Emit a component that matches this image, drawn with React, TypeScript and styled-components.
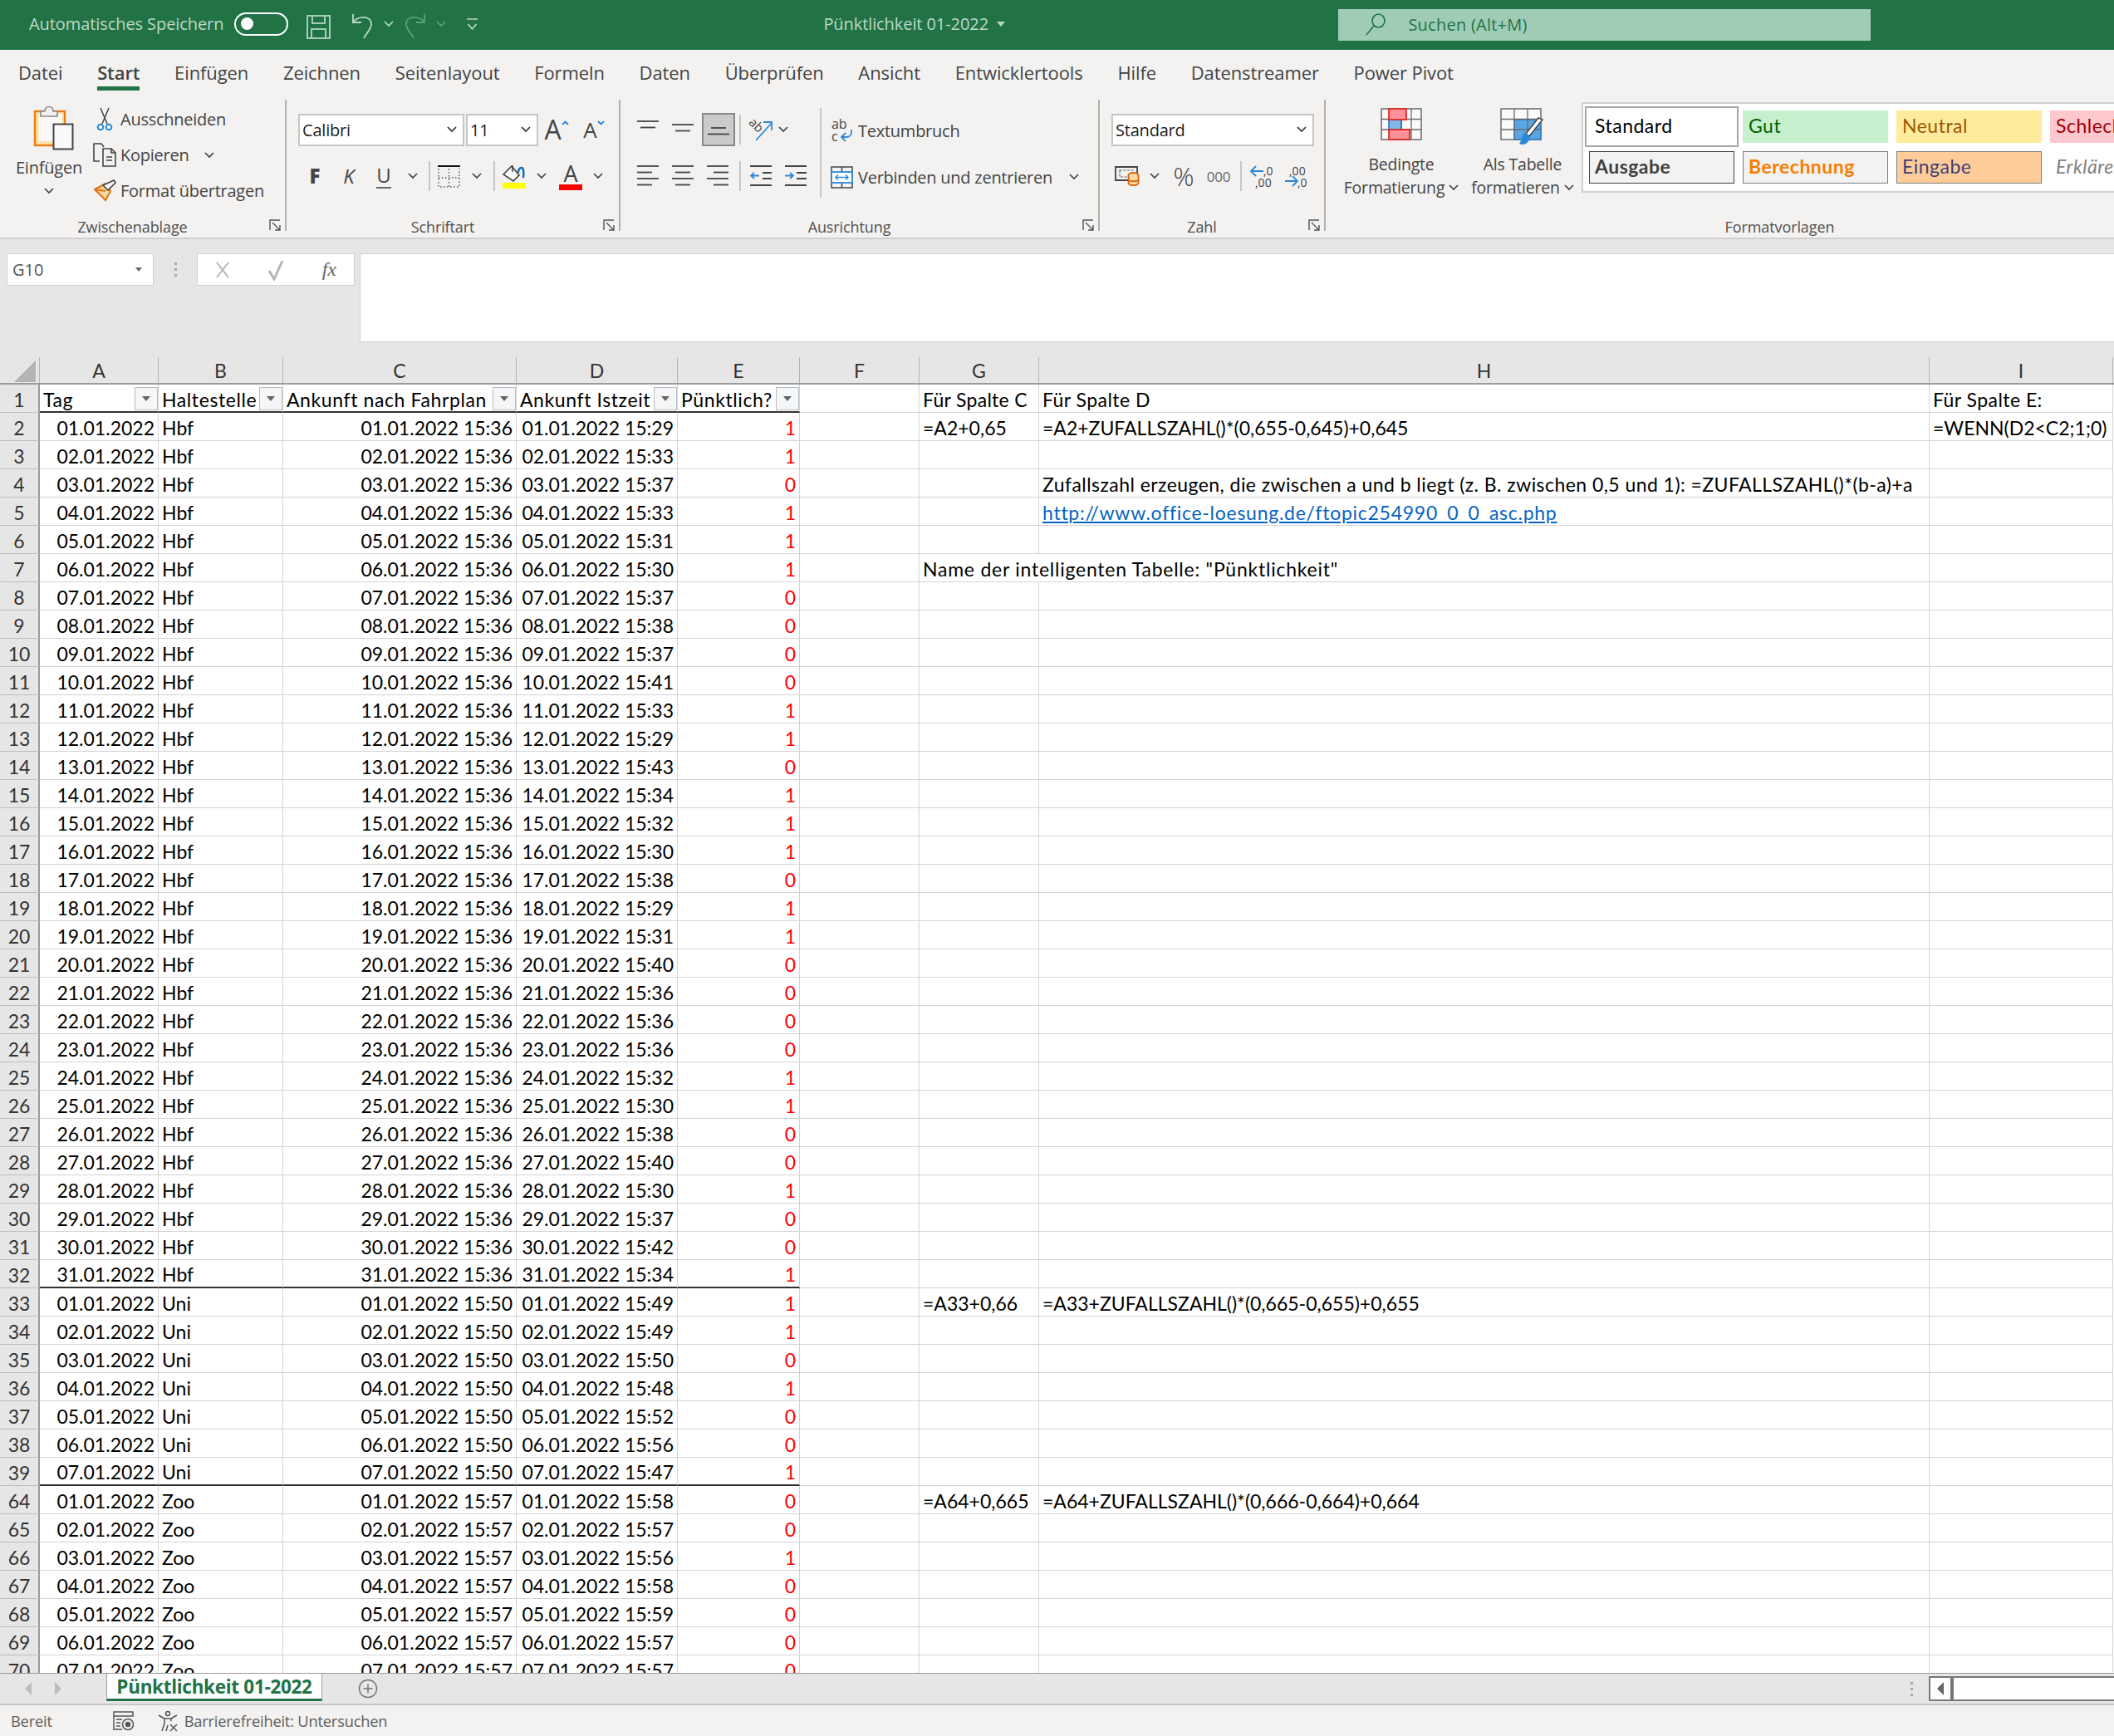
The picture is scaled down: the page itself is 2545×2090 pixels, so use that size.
import React from 'react';
import styled, { createGlobalStyle } from 'styled-components';

const uiFont = '"Open Sans", "Noto Sans", sans-serif';
const cellFont = 'Lato, "Liberation Sans", sans-serif';
const columns = '48px 143px 150px 281px 194px 147px 144px 144px 1072px 221px 1fr';

const GlobalStyle = createGlobalStyle`
  html, body { margin: 0; padding: 0; background: #f3f2f1; }
  * { box-sizing: border-box; }
`;

const Page = styled.div`
  width: 2545px;
  height: 2090px;
  display: flex;
  flex-direction: column;
  overflow: hidden;
  font-family: ${uiFont};
  color: #444;
  background: #f3f2f1;
`;

/* title bar */
const TitleBar = styled.div`
  height: 60px;
  flex: none;
  background: #217346;
  display: flex;
  align-items: center;
  padding: 0 0 3px 35px;
  color: #bcd8c8;
  font-size: 20px;
  letter-spacing: -0.08px;
`;
const Toggle = styled.div`
  width: 65px;
  height: 28px;
  margin-left: 13px;
  border: 2px solid #fff;
  border-radius: 14px;
  display: flex;
  align-items: center;
  padding-left: 6px;
  &::before {
    content: '';
    width: 15px;
    height: 15px;
    border-radius: 50%;
    background: #fff;
  }
`;
const Qat = styled.div<{ $w: number }>`
  width: ${(p) => p.$w}px;
  flex: none;
  display: flex;
  align-items: center;
  justify-content: center;
`;
const QatIconWrap = styled.div<{ $drop: number }>`
  margin-top: ${(p) => p.$drop}px;
  display: flex;
`;
const DocTitle = styled.div`
  margin-left: 416px;
  display: flex;
  align-items: center;
  gap: 10px;
  width: 620px;
`;
const SearchBox = styled.div`
  width: 641px;
  height: 38px;
  margin-top: 3px;
  padding: 0 0 2px 33px;
  background: #a0ccb5;
  color: #217346;
  display: flex;
  align-items: center;
  gap: 26px;
  letter-spacing: 0.25px;
`;

/* ribbon tabs */
const TabRow = styled.div`
  height: 55px;
  flex: none;
  display: flex;
  gap: 41.7px;
  padding-left: 22px;
`;
const RibbonTab = styled.div<{ $active?: boolean }>`
  height: 49px;
  padding-top: 11px;
  font-size: 22px;
  line-height: 32px;
  letter-spacing: -0.1px;
  white-space: nowrap;
  color: #444;
  font-weight: ${(p) => (p.$active ? 600 : 400)};
  border-bottom: 5px solid ${(p) => (p.$active ? '#217346' : 'transparent')};
`;

/* ribbon body */
const Ribbon = styled.div`
  height: 173px;
  flex: none;
  display: flex;
  padding: 5px 0 8px;
  border-bottom: 2px solid #d2d0ce;
`;
const Group = styled.div<{ $w: number; $last?: boolean }>`
  width: ${(p) => p.$w}px;
  flex: none;
  display: flex;
  flex-direction: column;
  border-right: ${(p) => (p.$last ? 'none' : '2px solid #b3b0ad')};
`;
const GroupBody = styled.div`
  height: 138px;
  display: flex;
`;
const GroupFooter = styled.div`
  height: 20px;
  display: flex;
  align-items: flex-end;
  padding-right: 5px;
`;
const GroupLabel = styled.div`
  flex: 1;
  height: 20px;
  line-height: 30px;
  text-align: center;
  font-size: 18px;
  letter-spacing: -0.1px;
  color: #505050;
`;
const Launcher = styled.div`
  width: 14px;
  height: 14px;
  margin-left: 5px;
  display: flex;
`;
const PasteColumn = styled.div`
  width: 118px;
  margin-right: -7px;
  padding-top: 7px;
  display: flex;
  flex-direction: column;
  align-items: center;
  font-size: 20px;
  letter-spacing: -0.2px;
  gap: 11px;
`;
const PasteIconWrap = styled.div`
  width: 118px;
  height: 50px;
  padding-left: 40px;
`;
const ClipColumn = styled.div`
  padding-top: 2px;
  display: flex;
  flex-direction: column;
`;
const ClipRow = styled.div`
  height: 43px;
  display: flex;
  align-items: center;
  font-size: 20px;
  letter-spacing: -0.25px;
  white-space: nowrap;
`;
const ClipIcon = styled.div`
  width: 34px;
  display: flex;
  justify-content: center;
  padding-right: 4px;
`;
const ToolBlock = styled.div<{ $left?: number }>`
  padding: 16px 0 0 ${(p) => p.$left ?? 0}px;
  display: flex;
  flex-direction: column;
  gap: 16px;
`;
const ToolRow = styled.div`
  height: 40px;
  display: flex;
  align-items: center;
`;
const Slot = styled.div<{ $w: number }>`
  width: ${(p) => p.$w}px;
  height: 40px;
  flex: none;
  display: flex;
  align-items: center;
  justify-content: center;
  white-space: nowrap;
`;
const SlotRule = styled.div`
  width: 2px;
  height: 36px;
  background: #c8c6c4;
`;
const DropBox = styled.div<{ $w: number }>`
  width: ${(p) => p.$w}px;
  height: 39px;
  flex: none;
  background: #fff;
  border: 2px solid #c8c6c4;
  color: #222;
  display: flex;
  align-items: center;
  justify-content: space-between;
  padding: 0 7px 0 3px;
  font-size: 20px;
  letter-spacing: -0.2px;
`;
const BoxGap = styled.div`
  width: 2px;
  flex: none;
`;
const FontStyleLetter = styled.span<{ $bold?: boolean; $italic?: boolean; $under?: boolean }>`
  font-size: 24px;
  line-height: 28px;
  color: #444;
  font-weight: ${(p) => (p.$bold ? 800 : 400)};
  font-style: ${(p) => (p.$italic ? 'italic' : 'normal')};
  border-bottom: ${(p) => (p.$under ? '2px solid #666' : 'none')};
`;
const GrowLetter = styled.span<{ $size: number }>`
  font-size: ${(p) => p.$size}px;
  line-height: 30px;
  color: #444;
`;
const CaretMark = styled.svg`
  margin-bottom: 16px;
`;
const ActiveAlign = styled.div`
  width: 40px;
  height: 40px;
  flex: none;
  background: #cdcbc9;
  border: 2px solid #8a8886;
  display: flex;
  align-items: center;
  justify-content: center;
`;
const ColorTool = styled.div`
  display: flex;
  flex-direction: column;
  align-items: center;
`;
const ColorBar = styled.div<{ $color: string }>`
  width: 28px;
  height: 7px;
  background: ${(p) => p.$color};
`;
const ColorLetter = styled.span`
  font-size: 27px;
  line-height: 27px;
  color: #444;
`;
const ThinZeros = styled.span`
  font-size: 17px;
  letter-spacing: -0.3px;
  color: #666;
`;
const PercentSign = styled.span`
  font-size: 31px;
  font-weight: 300;
  color: #444;
`;
const BigRule = styled.div`
  width: 2px;
  height: 108px;
  margin: 10px 0 0 4px;
  background: #c8c6c4;
  flex: none;
`;
const WrapColumn = styled.div`
  padding: 17px 0 0 5px;
  display: flex;
  flex-direction: column;
  gap: 16px;
  font-size: 20px;
  letter-spacing: -0.25px;
`;
const WrapRow = styled.div`
  height: 40px;
  display: flex;
  align-items: center;
  white-space: nowrap;
`;
const WrapIcon = styled.div`
  width: 39px;
  display: flex;
  justify-content: center;
`;
const StyleButton = styled.div<{ $w: number }>`
  width: ${(p) => p.$w}px;
  flex: none;
  padding-top: 10px;
  display: flex;
  flex-direction: column;
  align-items: center;
  font-size: 19.5px;
  line-height: 28px;
  letter-spacing: -0.2px;
  white-space: nowrap;
`;
const StyleIconWrap = styled.div`
  height: 54px;
`;
const StyleLine = styled.div`
  display: flex;
  align-items: center;
  gap: 5px;
`;
const Gallery = styled.div`
  margin: 3px 0 0 8px;
  width: 700px;
  height: 109px;
  flex: none;
  background: #fff;
  border: 2px solid #d2d0ce;
  padding: 8px 7px;
  display: grid;
  grid-template-columns: repeat(4, 175px);
  grid-auto-rows: 39px;
  gap: 10px;
`;
const StyleCell = styled.div<{ $bg?: string; $fg: string; $line?: string; $bold?: boolean; $italic?: boolean; $picked?: boolean }>`
  background: ${(p) => p.$bg ?? 'transparent'};
  color: ${(p) => p.$fg};
  border: ${(p) => (p.$line ? `1.5px solid ${p.$line}` : 'none')};
  font-family: ${cellFont};
  font-size: 23px;
  letter-spacing: 0.5px;
  font-weight: ${(p) => (p.$bold ? 700 : 400)};
  font-style: ${(p) => (p.$italic ? 'italic' : 'normal')};
  display: flex;
  align-items: center;
  padding: 0 0 4px ${(p) => (p.$line ? 6 : 7)}px;
  white-space: nowrap;
  overflow: hidden;
  outline: ${(p) => (p.$picked ? '2px solid #a8a6a4' : 'none')};
  outline-offset: 3px;
`;

/* formula bar */
const FormulaBar = styled.div`
  height: 142px;
  flex: none;
  background: #e6e6e6;
  display: flex;
  align-items: flex-start;
  padding: 17px 0 0 8px;
`;
const NameBox = styled.div`
  width: 177px;
  height: 39px;
  flex: none;
  background: #fff;
  border: 1px solid #d2d0ce;
  display: flex;
  align-items: center;
  justify-content: space-between;
  padding: 0 13px 0 6px;
  font-size: 20px;
  color: #555;
`;
const GripDots = styled.div`
  width: 52px;
  height: 39px;
  flex: none;
  display: flex;
  flex-direction: column;
  align-items: center;
  justify-content: center;
  gap: 4px;
  & i {
    width: 3px;
    height: 3px;
    background: #a9a9a9;
  }
`;
const FxBox = styled.div`
  width: 190px;
  height: 39px;
  flex: none;
  background: #fff;
  border: 1px solid #d2d0ce;
  display: flex;
  align-items: center;
  justify-content: space-between;
  padding: 0 21px 0 22px;
`;
const FxLetter = styled.span`
  font-family: 'Liberation Serif', serif;
  font-style: italic;
  font-size: 24px;
  color: #666;
`;
const FormulaInput = styled.div`
  flex: 1;
  height: 107px;
  margin-left: 6px;
  background: #fff;
  border: 1px solid #d2d0ce;
  border-right: none;
`;

/* sheet */
const Sheet = styled.div`
  flex: 1;
  min-height: 0;
  overflow: hidden;
  background: #fff;
  font-family: ${cellFont};
  font-size: 23px;
  color: #000;
`;
const HeaderRow = styled.div`
  height: 33px;
  display: grid;
  grid-template-columns: ${columns};
  background: #e6e6e6;
  border-bottom: 2px solid #9b9b9b;
`;
const ColumnHead = styled.div`
  border-right: 1px solid #b4b4b4;
  display: flex;
  align-items: center;
  justify-content: center;
  color: #333;
`;
const CornerHead = styled.div`
  border-right: 1px solid #b4b4b4;
  display: flex;
  align-items: flex-end;
  justify-content: flex-end;
  padding: 0 3px 1px 0;
`;
const Row = styled.div`
  height: 34px;
  display: grid;
  grid-template-columns: ${columns};
`;
const RowHead = styled.div`
  background: #e6e6e6;
  border-right: 2px solid #9b9b9b;
  border-bottom: 1px solid #bdbdbd;
  padding-top: 2px;
  display: flex;
  align-items: center;
  justify-content: center;
  color: #333;
`;
const Cell = styled.div<{ $right?: boolean; $heavy?: boolean; $open?: boolean; $red?: boolean; $track?: number }>`
  height: 34px;
  display: flex;
  align-items: center;
  justify-content: ${(p) => (p.$right ? 'flex-end' : 'flex-start')};
  padding: 2px 4px 0;
  white-space: nowrap;
  letter-spacing: ${(p) => p.$track ?? 0}px;
  color: ${(p) => (p.$red ? '#f00' : '#000')};
  border-right: 1px solid ${(p) => (p.$open ? 'transparent' : '#d4d4d4')};
  border-bottom: ${(p) => (p.$heavy ? '2px solid #333' : '1px solid #d4d4d4')};
`;
const TableHead = styled(Cell)`
  justify-content: space-between;
  padding: 3px 0 0 4px;
  letter-spacing: 0.6px;
`;
const FilterButton = styled.div`
  width: 28px;
  height: 28px;
  flex: none;
  align-self: flex-end;
  margin-bottom: 1px;
  background: #f5f6f8;
  border: 1px solid #b5bcc6;
  display: flex;
  align-items: center;
  justify-content: center;
`;
const SheetLink = styled.a`
  color: #0563c1;
  text-decoration: underline;
`;

/* sheet tabs and status */
const TabStrip = styled.div`
  height: 37px;
  flex: none;
  background: #e6e6e6;
  border-top: 1px solid #9b9b9b;
  display: flex;
  align-items: flex-start;
`;
const TabArrows = styled.div`
  width: 128px;
  height: 36px;
  flex: none;
  display: flex;
  align-items: center;
  gap: 28px;
  padding-left: 30px;
`;
const SheetTabLabel = styled.div`
  width: 260px;
  height: 33px;
  flex: none;
  background: #fff;
  border-left: 1px solid #9b9b9b;
  border-right: 1px solid #9b9b9b;
  border-bottom: 3px solid #217346;
  display: flex;
  align-items: center;
  justify-content: center;
  font-weight: 700;
  font-size: 22.5px;
  letter-spacing: -0.3px;
  color: #217346;
`;
const AddSheet = styled.div`
  width: 110px;
  height: 36px;
  flex: none;
  display: flex;
  align-items: center;
  justify-content: center;
`;
const StripSpacer = styled.div`
  flex: 1;
`;
const StripDots = styled(GripDots)`
  width: 20px;
  height: 36px;
`;
const ScrollTrack = styled.div`
  width: 223px;
  height: 30px;
  flex: none;
  margin: 3px 0 0 11px;
  background: #fff;
  border: 2px solid #777;
  border-right: none;
  display: flex;
`;
const ScrollButton = styled.div`
  width: 28px;
  border-right: 4px solid #777;
  display: flex;
  align-items: center;
  justify-content: center;
`;
const StatusBar = styled.div`
  height: 39px;
  flex: none;
  background: #f3f2f1;
  border-top: 2px solid #c8c6c4;
  display: flex;
  align-items: center;
  padding-left: 13px;
  font-size: 18.3px;
  letter-spacing: -0.2px;
  color: #605e5c;
`;
const StatusItem = styled.div<{ $left: number }>`
  margin-left: ${(p) => p.$left}px;
  display: flex;
`;

const Chevron = ({ color = '#444' }: { color?: string }) => (
  <svg width="12" height="8" viewBox="0 0 12 8" fill="none">
    <path d="M1 1l5 5 5-5" stroke={color} strokeWidth="1.7" />
  </svg>
);

const DownTriangle = ({ color = '#666', size = 10 }: { color?: string; size?: number }) => (
  <svg width={size} height={size / 2 + 1} viewBox="0 0 10 6">
    <path d="M0 0h10L5 6z" fill={color} />
  </svg>
);

const LauncherIcon = () => (
  <svg width="14" height="14" viewBox="0 0 14 14" fill="none" stroke="#555" strokeWidth="1.4">
    <path d="M13 1H1v12" />
    <path d="M4 4l9 9M13 7v6H7" />
  </svg>
);

const SaveIcon = () => (
  <svg width="29" height="29" viewBox="0 0 29 29" fill="none" stroke="#a7cbb8" strokeWidth="2">
    <path d="M1 1h27v27H1z" />
    <path d="M7 1v9h15V1M6 28V17h17v11" />
  </svg>
);

const UndoIcon = ({ color, flip }: { color: string; flip?: boolean }) => (
  <svg width="26" height="31" viewBox="0 0 26 31" fill="none" stroke={color} strokeWidth="1.8" style={flip ? { transform: 'scaleX(-1)' } : undefined}>
    <path d="M2 1v10h10" />
    <path d="M2 11C7 3 24 2 24 13c0 6-6 11-9 17" />
  </svg>
);

const QatIcon = () => (
  <svg width="13" height="16" viewBox="0 0 13 16" fill="none" stroke="#bcd8c8" strokeWidth="1.7">
    <path d="M0 1h13M1.5 7l5 6 5-6" />
  </svg>
);

const SearchIcon = () => (
  <svg width="25" height="27" viewBox="0 0 25 27" fill="none" stroke="#217346" strokeWidth="1.6">
    <ellipse cx="15.5" cy="9" rx="7.5" ry="8" />
    <path d="M10 15L1 26" />
  </svg>
);

const PasteIcon = () => (
  <svg width="50" height="54" viewBox="0 0 50 54">
    <rect x="2" y="7" width="36" height="41" fill="#fde3ae" stroke="#ed7d12" strokeWidth="2.4" />
    <rect x="7" y="10" width="28" height="33" fill="#faf9f8" />
    <path d="M9 7h5c0-3 2-5.5 5-5.5S24 4 24 7h5v6H9z" fill="#f3f2f1" stroke="#8a8886" strokeWidth="1.6" />
    <rect x="24.5" y="22.5" width="23" height="30" fill="#fafafa" stroke="#444" strokeWidth="2" />
  </svg>
);

const ScissorsIcon = () => (
  <svg width="20" height="29" viewBox="0 0 20 29" fill="none">
    <path d="M5 1l8 19M15 1L7 20" stroke="#444" strokeWidth="1.5" />
    <circle cx="5" cy="24" r="3.3" stroke="#2b88d8" strokeWidth="2" />
    <circle cx="15" cy="24" r="3.3" stroke="#2b88d8" strokeWidth="2" />
  </svg>
);

const CopyIcon = () => (
  <svg width="29" height="29" viewBox="0 0 29 29" fill="none" stroke="#444" strokeWidth="1.6">
    <path d="M8 22H1V1h9l3 4" />
    <path d="M12 7h10l5 5v16H12z" />
    <path d="M22 7v5h5" />
    <path d="M16 17h7M16 21h7" strokeWidth="1.3" />
  </svg>
);

const PainterIcon = () => (
  <svg width="29" height="27" viewBox="0 0 29 27" fill="none">
    <path d="M2 12L15 5l6 9-6 11z" fill="#fbd9a4" stroke="#e3730f" strokeWidth="2" />
    <path d="M2 12l13 2" stroke="#e3730f" strokeWidth="2" />
    <path d="M12 7l6 6 9-9-2-3-4 2z" fill="#fafafa" stroke="#444" strokeWidth="1.6" />
  </svg>
);

const BorderIcon = () => (
  <svg width="27" height="27" viewBox="0 0 27 27" fill="none" stroke="#555" strokeWidth="1.5">
    <path d="M0 1h27" stroke="#111" strokeWidth="2" />
    <path d="M1 4v22h25V4M1 15h25M13.5 4v22" strokeDasharray="1.5 2.5" />
  </svg>
);

const FillIcon = () => (
  <svg width="28" height="22" viewBox="0 0 28 22" fill="none">
    <path d="M1 12L11 2l9 11-7 7z" stroke="#444" strokeWidth="1.7" fill="#fafafa" />
    <path d="M12 1v8" stroke="#444" strokeWidth="1.5" />
    <path d="M19 10c0-5 2-6 4-6s3 4 2 12" stroke="#0f6cbd" strokeWidth="2.4" />
  </svg>
);

const AlignLines = ({ rows, top = 0 }: { rows: [number, number][]; top?: number }) => (
  <svg width="26" height="26" viewBox="0 0 26 26" fill="none" stroke="#444" strokeWidth="1.8">
    {rows.map(([x, w], i) => (
      <path key={i} d={`M${x} ${top + 1 + i * 7.5}h${w}`} />
    ))}
  </svg>
);

const OrientationIcon = () => (
  <svg width="30" height="30" viewBox="0 0 30 30" fill="none" overflow="visible">
    <text x="0" y="14" fontSize="15" fill="#444" fontFamily={uiFont} transform="rotate(45 8 10)">ab</text>
    <path d="M9 28L28 7M18 6h10v10" stroke="#2b88d8" strokeWidth="1.8" />
  </svg>
);

const WrapIconSvg = () => (
  <svg width="26" height="28" viewBox="0 0 26 28" fill="none" overflow="visible">
    <text x="0" y="12" fontSize="16" fill="#444" fontFamily={uiFont}>ab</text>
    <text x="0" y="27" fontSize="16" fill="#444" fontFamily={uiFont}>c</text>
    <path d="M24 13v3c0 4-3 6-6 6h-5M17 17l-5 5 5 5" stroke="#2b88d8" strokeWidth="1.8" />
  </svg>
);

const IndentIcon = ({ flip }: { flip?: boolean }) => (
  <svg width="26" height="26" viewBox="0 0 26 26" fill="none">
    <path d="M0 1h26M0 24h26" stroke="#444" strokeWidth="1.8" />
    <path d={flip ? 'M14 9h12M14 16h12' : 'M15 9h11M15 16h11'} stroke="#444" strokeWidth="1.8" />
    <path d={flip ? 'M0 12.5h9M6 9l4 3.5L6 16' : 'M11 12.5H2M5 9l-4 3.5L5 16'} stroke="#2b88d8" strokeWidth="1.8" />
  </svg>
);

const MergeIcon = () => (
  <svg width="27" height="27" viewBox="0 0 27 27" fill="none">
    <rect x="1" y="1" width="25" height="25" stroke="#444" strokeWidth="1.5" />
    <path d="M13.5 1v6M13.5 20v6" stroke="#444" strokeWidth="1.5" />
    <rect x="1" y="7" width="25" height="13" fill="#fff" stroke="#2b88d8" strokeWidth="1.8" />
    <path d="M6 13.5h15M9 10.5l-3 3 3 3M18 10.5l3 3-3 3" stroke="#2b88d8" strokeWidth="1.5" />
  </svg>
);

const CurrencyIcon = () => (
  <svg width="30" height="24" viewBox="0 0 30 24" fill="none">
    <path d="M1 1h26v16H1z" stroke="#444" strokeWidth="1.8" />
    <path d="M6 5h16v8H6z" stroke="#666" strokeWidth="1.2" strokeDasharray="3 1.5" />
    <ellipse cx="22.5" cy="11" rx="6" ry="3" fill="#fbd9a4" stroke="#d9650b" strokeWidth="1.8" />
    <path d="M16.5 11v9c0 4 12 4 12 0v-9M16.5 16c0 3 12 3 12 0" fill="#fbd9a4" stroke="#d9650b" strokeWidth="1.8" />
  </svg>
);

const DecimalIcon = ({ more }: { more?: boolean }) => (
  <svg width="28" height="28" viewBox="0 0 28 28" fill="none" overflow="visible">
    {more ? (
      <>
        <text x="6" y="13" fontSize="14" fill="#444" fontFamily={uiFont}>,00</text>
        <text x="16" y="27" fontSize="14" fill="#444" fontFamily={uiFont}>,0</text>
        <path d="M1 20h15M10 14l6 6-6 6" stroke="#2b88d8" strokeWidth="1.8" />
      </>
    ) : (
      <>
        <text x="16" y="13" fontSize="14" fill="#444" fontFamily={uiFont}>,0</text>
        <text x="6" y="27" fontSize="14" fill="#444" fontFamily={uiFont}>,00</text>
        <path d="M1 8h15M7 2L1 8l6 6" stroke="#2b88d8" strokeWidth="1.8" />
      </>
    )}
  </svg>
);

const ConditionalIcon = () => (
  <svg width="50" height="39" viewBox="0 0 50 39" fill="none">
    <rect x="1" y="1" width="48" height="37" fill="#fafafa" stroke="#6b6b6b" strokeWidth="1.5" />
    <path d="M13 1v37M25 1v37M37 1v37M1 13.5h48M1 26h48" stroke="#6b6b6b" strokeWidth="1.3" />
    <rect x="10" y="14" width="15" height="12" fill="#7fb8e8" stroke="#0f6cbd" strokeWidth="1.5" />
    <rect x="10" y="1" width="21" height="13" fill="#ff919b" stroke="#d92c26" strokeWidth="1.8" />
    <rect x="10" y="26" width="25" height="12" fill="#ff919b" stroke="#d92c26" strokeWidth="1.8" />
  </svg>
);

const TableIcon = () => (
  <svg width="54" height="48" viewBox="0 0 54 48" fill="none">
    <rect x="1" y="1" width="48" height="37" fill="#fafafa" stroke="#6b6b6b" strokeWidth="1.5" />
    <rect x="17" y="14" width="32" height="24" fill="#5aa5e3" stroke="#0f6cbd" strokeWidth="1" />
    <path d="M17 1v37M33 1v37M1 13.5h48M1 26h48" stroke="#6b6b6b" strokeWidth="1.3" />
    <path d="M51 14L35 34l-4-3 15-19z" fill="#fff" stroke="#444" strokeWidth="1.5" />
    <path d="M31 30c-5 0-4 8-8 13 6 3 12-1 13-8z" fill="#2b88d8" />
  </svg>
);

const CrossIcon = () => (
  <svg width="16" height="20" viewBox="0 0 16 20" fill="none" stroke="#b5b5b5" strokeWidth="2">
    <path d="M1 1l14 18M15 1L1 19" />
  </svg>
);

const CheckIcon = () => (
  <svg width="20" height="26" viewBox="0 0 20 26" fill="none" stroke="#b5b5b5" strokeWidth="3">
    <path d="M2 14l6 10L18 2" />
  </svg>
);

const CornerIcon = () => (
  <svg width="27" height="26" viewBox="0 0 27 26">
    <path d="M26 0v26H0z" fill="#b4b4b4" />
  </svg>
);

const SideArrow = ({ left, color = '#bdbdbd' }: { left?: boolean; color?: string }) => (
  <svg width="8" height="16" viewBox="0 0 8 16">
    <path d={left ? 'M8 0v16L0 8z' : 'M0 0v16l8-8z'} fill={color} />
  </svg>
);

const AddIcon = () => (
  <svg width="24" height="24" viewBox="0 0 24 24" fill="none" stroke="#777" strokeWidth="1.5">
    <circle cx="12" cy="12" r="10.5" />
    <path d="M12 6.5v11M6.5 12h11" />
  </svg>
);

const MacroIcon = () => (
  <svg width="26" height="24" viewBox="0 0 26 24" fill="none" stroke="#555" strokeWidth="1.5">
    <path d="M1 1h23v5H1zM1 6v16h10M4 10h7M4 14h5M4 18h5" />
    <circle cx="18" cy="16" r="6.5" />
    <circle cx="18" cy="16" r="2.5" fill="#555" />
  </svg>
);

const AccessIcon = () => (
  <svg width="26" height="26" viewBox="0 0 26 26" fill="none" stroke="#555" strokeWidth="1.5">
    <circle cx="13" cy="4" r="2.5" />
    <path d="M2 6l7 4v6l-3 9M24 6l-7 4v3M9 10h8" />
    <path d="M13 18l-2 7M16 17l8 8M24 17l-8 8" />
  </svg>
);

type Entry = { n: number; day: string; stop: string; plan: string; ist: string; ok: number };

const pad = (v: number) => String(v).padStart(2, '0');

const buildRows = (start: number, stop: string, plan: number, data: [number, number][]): Entry[] =>
  data.map(([m, ok], i) => {
    const date = `${pad(i + 1)}.01.2022`;
    return { n: start + i, day: date, stop, plan: `${date} 15:${plan}`, ist: `${date} 15:${m}`, ok };
  });

const rows: Entry[] = [
  ...buildRows(2, 'Hbf', 36, [
    [29, 1], [33, 1], [37, 0], [33, 1], [31, 1], [30, 1], [37, 0], [38, 0], [37, 0], [41, 0],
    [33, 1], [29, 1], [43, 0], [34, 1], [32, 1], [30, 1], [38, 0], [29, 1], [31, 1], [40, 0],
    [36, 0], [36, 0], [36, 0], [32, 1], [30, 1], [38, 0], [40, 0], [30, 1], [37, 0], [42, 0], [34, 1],
  ]),
  ...buildRows(33, 'Uni', 50, [[49, 1], [49, 1], [50, 0], [48, 1], [52, 0], [56, 0], [47, 1]]),
  ...buildRows(64, 'Zoo', 57, [[58, 0], [57, 0], [56, 1], [58, 0], [59, 0], [57, 0], [57, 0]]),
];

type Note = { g?: string; h?: React.ReactNode; i?: string; open?: boolean; gTrack?: number; hTrack?: number };

const notes: Record<number, Note> = {
  2: { g: '=A2+0,65', h: '=A2+ZUFALLSZAHL()*(0,655-0,645)+0,645', i: '=WENN(D2<C2;1;0)' },
  4: { h: 'Zufallszahl erzeugen, die zwischen a und b liegt (z. B. zwischen 0,5 und 1): =ZUFALLSZAHL()*(b-a)+a', hTrack: 0.44 },
  5: { h: <SheetLink>http://www.office-loesung.de/ftopic254990_0_0_asc.php</SheetLink>, hTrack: 0.73 },
  7: { g: 'Name der intelligenten Tabelle: "Pünktlichkeit"', open: true, gTrack: 0.76 },
  33: { g: '=A33+0,66', h: '=A33+ZUFALLSZAHL()*(0,665-0,655)+0,655' },
  64: { g: '=A64+0,665', h: '=A64+ZUFALLSZAHL()*(0,666-0,664)+0,664' },
};

const heavyRows = [32, 39];

const tabs = ['Datei', 'Start', 'Einfügen', 'Zeichnen', 'Seitenlayout', 'Formeln', 'Daten', 'Überprüfen', 'Ansicht', 'Entwicklertools', 'Hilfe', 'Datenstreamer', 'Power Pivot'];
const tableHeads = ['Tag', 'Haltestelle', 'Ankunft nach Fahrplan', 'Ankunft Istzeit', 'Pünktlich?'];

const App: React.FC = () => {
  return (
    <Page>
      <GlobalStyle />
      <TitleBar>
        Automatisches Speichern
        <Toggle />
        <Qat $w={22} />
        <QatIconWrap $drop={7}><SaveIcon /></QatIconWrap>
        <Qat $w={25} />
        <QatIconWrap $drop={6}><UndoIcon color="#bcd8c8" /></QatIconWrap>
        <Qat $w={38}><Chevron color="#bcd8c8" /></Qat>
        <QatIconWrap $drop={6}><UndoIcon color="#5d9f7e" flip /></QatIconWrap>
        <Qat $w={36}><Chevron color="#5d9f7e" /></Qat>
        <Qat $w={13} />
        <QatIconWrap $drop={3}><QatIcon /></QatIconWrap>
        <DocTitle>
          Pünktlichkeit 01-2022
          <DownTriangle color="#bcd8c8" />
        </DocTitle>
        <SearchBox>
          <SearchIcon />
          Suchen (Alt+M)
        </SearchBox>
      </TitleBar>

      <TabRow>
        {tabs.map((t) => (
          <RibbonTab key={t} $active={t === 'Start'}>{t}</RibbonTab>
        ))}
      </TabRow>

      <Ribbon>
        <Group $w={345}>
          <GroupBody>
            <PasteColumn>
              <PasteIconWrap><PasteIcon /></PasteIconWrap>
              Einfügen
              <Chevron />
            </PasteColumn>
            <ClipColumn>
              <ClipRow><ClipIcon><ScissorsIcon /></ClipIcon>Ausschneiden</ClipRow>
              <ClipRow>
                <ClipIcon><CopyIcon /></ClipIcon>Kopieren
                <Slot $w={50}><Chevron /></Slot>
              </ClipRow>
              <ClipRow><ClipIcon><PainterIcon /></ClipIcon>Format übertragen</ClipRow>
            </ClipColumn>
          </GroupBody>
          <GroupFooter>
            <GroupLabel>Zwischenablage</GroupLabel>
            <Launcher><LauncherIcon /></Launcher>
          </GroupFooter>
        </Group>

        <Group $w={402}>
          <GroupBody>
            <ToolBlock $left={14}>
              <ToolRow>
                <DropBox $w={200}>Calibri<Chevron color="#333" /></DropBox>
                <BoxGap />
                <DropBox $w={87}>11<Chevron color="#333" /></DropBox>
                <Slot $w={44}>
                  <GrowLetter $size={32}>A</GrowLetter>
                  <CaretMark width="9" height="6" viewBox="0 0 9 6" fill="none">
                    <path d="M1 5l3.5-3.5L8 5" stroke="#2b88d8" strokeWidth="1.8" />
                  </CaretMark>
                </Slot>
                <Slot $w={46}>
                  <GrowLetter $size={26}>A</GrowLetter>
                  <CaretMark width="9" height="6" viewBox="0 0 9 6" fill="none">
                    <path d="M1 1l3.5 3.5L8 1" stroke="#2b88d8" strokeWidth="1.8" />
                  </CaretMark>
                </Slot>
              </ToolRow>
              <ToolRow>
                <Slot $w={40}><FontStyleLetter $bold>F</FontStyleLetter></Slot>
                <Slot $w={42}><FontStyleLetter $italic>K</FontStyleLetter></Slot>
                <Slot $w={42}><FontStyleLetter $under>U</FontStyleLetter></Slot>
                <Slot $w={27}><Chevron /></Slot>
                <Slot $w={14}><SlotRule /></Slot>
                <Slot $w={32}><BorderIcon /></Slot>
                <Slot $w={36}><Chevron /></Slot>
                <Slot $w={6}><SlotRule /></Slot>
                <Slot $w={42}>
                  <ColorTool><FillIcon /><ColorBar $color="#ff0" /></ColorTool>
                </Slot>
                <Slot $w={24}><Chevron /></Slot>
                <Slot $w={46}>
                  <ColorTool><ColorLetter>A</ColorLetter><ColorBar $color="#f00" /></ColorTool>
                </Slot>
                <Slot $w={20}><Chevron /></Slot>
              </ToolRow>
            </ToolBlock>
          </GroupBody>
          <GroupFooter>
            <GroupLabel>Schriftart</GroupLabel>
            <Launcher><LauncherIcon /></Launcher>
          </GroupFooter>
        </Group>

        <Group $w={577}>
          <GroupBody>
            <ToolBlock $left={14}>
              <ToolRow>
                <Slot $w={38}><AlignLines rows={[[0, 26], [4, 18]]} top={2} /></Slot>
                <Slot $w={46}><AlignLines rows={[[0, 26], [4, 18]]} top={6} /></Slot>
                <ActiveAlign><AlignLines rows={[[4, 18], [0, 26]]} top={10} /></ActiveAlign>
                <Slot $w={12}><SlotRule /></Slot>
                <Slot $w={38}><OrientationIcon /></Slot>
                <Slot $w={16}><Chevron /></Slot>
              </ToolRow>
              <ToolRow>
                <Slot $w={38}><AlignLines rows={[[0, 26], [0, 18], [0, 26], [0, 18]]} /></Slot>
                <Slot $w={46}><AlignLines rows={[[0, 26], [4, 18], [0, 26], [4, 18]]} /></Slot>
                <Slot $w={38}><AlignLines rows={[[0, 26], [8, 18], [0, 26], [8, 18]]} /></Slot>
                <Slot $w={16}><SlotRule /></Slot>
                <Slot $w={34}><IndentIcon /></Slot>
                <Slot $w={50}><IndentIcon flip /></Slot>
              </ToolRow>
            </ToolBlock>
            <BigRule />
            <WrapColumn>
              <WrapRow><WrapIcon><WrapIconSvg /></WrapIcon>Textumbruch</WrapRow>
              <WrapRow>
                <WrapIcon><MergeIcon /></WrapIcon>Verbinden und zentrieren
                <Slot $w={52}><Chevron /></Slot>
              </WrapRow>
            </WrapColumn>
          </GroupBody>
          <GroupFooter>
            <GroupLabel>Ausrichtung</GroupLabel>
            <Launcher><LauncherIcon /></Launcher>
          </GroupFooter>
        </Group>

        <Group $w={272}>
          <GroupBody>
            <ToolBlock $left={14}>
              <ToolRow><DropBox $w={244}>Standard<Chevron color="#333" /></DropBox></ToolRow>
              <ToolRow>
                <Slot $w={38}><CurrencyIcon /></Slot>
                <Slot $w={28}><Chevron /></Slot>
                <Slot $w={42}><PercentSign>%</PercentSign></Slot>
                <Slot $w={42}><ThinZeros>000</ThinZeros></Slot>
                <Slot $w={12}><SlotRule /></Slot>
                <Slot $w={38}><DecimalIcon /></Slot>
                <Slot $w={44}><DecimalIcon more /></Slot>
              </ToolRow>
            </ToolBlock>
          </GroupBody>
          <GroupFooter>
            <GroupLabel>Zahl</GroupLabel>
            <Launcher><LauncherIcon /></Launcher>
          </GroupFooter>
        </Group>

        <Group $w={1098} $last>
          <GroupBody>
            <Slot $w={8} />
            <StyleButton $w={166}>
              <StyleIconWrap><ConditionalIcon /></StyleIconWrap>
              Bedingte
              <StyleLine>Formatierung<Chevron /></StyleLine>
            </StyleButton>
            <StyleButton $w={126}>
              <StyleIconWrap><TableIcon /></StyleIconWrap>
              Als Tabelle
              <StyleLine>formatieren<Chevron /></StyleLine>
            </StyleButton>
            <Gallery>
              <StyleCell $bg="#fff" $fg="#000" $picked>Standard</StyleCell>
              <StyleCell $bg="#c6efce" $fg="#006100">Gut</StyleCell>
              <StyleCell $bg="#ffeb9c" $fg="#9c5700">Neutral</StyleCell>
              <StyleCell $bg="#ffc7ce" $fg="#9c0006">Schlecht</StyleCell>
              <StyleCell $bg="#f2f2f2" $fg="#3f3f3f" $line="#3f3f3f" $bold>Ausgabe</StyleCell>
              <StyleCell $bg="#f2f2f2" $fg="#fa7d00" $line="#7f7f7f" $bold>Berechnung</StyleCell>
              <StyleCell $bg="#ffcc99" $fg="#3f3f76" $line="#7f7f7f">Eingabe</StyleCell>
              <StyleCell $fg="#7f7f7f" $italic>Erklärend</StyleCell>
            </Gallery>
          </GroupBody>
          <GroupFooter>
            <GroupLabel>Formatvorlagen</GroupLabel>
          </GroupFooter>
        </Group>
      </Ribbon>

      <FormulaBar>
        <NameBox>G10<DownTriangle size={8} /></NameBox>
        <GripDots><i /><i /><i /></GripDots>
        <FxBox>
          <CrossIcon />
          <CheckIcon />
          <FxLetter>fx</FxLetter>
        </FxBox>
        <FormulaInput />
      </FormulaBar>

      <Sheet>
        <HeaderRow>
          <CornerHead><CornerIcon /></CornerHead>
          {'ABCDEFGHI'.split('').map((c) => (
            <ColumnHead key={c}>{c}</ColumnHead>
          ))}
        </HeaderRow>
        <Row>
          <RowHead>1</RowHead>
          {tableHeads.map((h) => (
            <TableHead key={h} $heavy>
              {h}
              <FilterButton><DownTriangle size={10} /></FilterButton>
            </TableHead>
          ))}
          <Cell />
          <Cell $track={0.3}>Für Spalte C</Cell>
          <Cell $track={0.45}>Für Spalte D</Cell>
          <Cell $track={0.45}>Für Spalte E:</Cell>
        </Row>
        {rows.map((r) => {
          const note = notes[r.n] ?? {};
          const heavy = heavyRows.includes(r.n);
          return (
            <Row key={r.n}>
              <RowHead>{r.n}</RowHead>
              <Cell $right $heavy={heavy}>{r.day}</Cell>
              <Cell $heavy={heavy}>{r.stop}</Cell>
              <Cell $right $heavy={heavy}>{r.plan}</Cell>
              <Cell $right $heavy={heavy}>{r.ist}</Cell>
              <Cell $right $red $heavy={heavy}>{r.ok}</Cell>
              <Cell />
              <Cell $open={note.open} $track={note.gTrack}>{note.g}</Cell>
              <Cell $track={note.hTrack}>{note.h}</Cell>
              <Cell>{note.i}</Cell>
            </Row>
          );
        })}
      </Sheet>

      <TabStrip>
        <TabArrows>
          <SideArrow left />
          <SideArrow />
        </TabArrows>
        <SheetTabLabel>Pünktlichkeit 01-2022</SheetTabLabel>
        <AddSheet><AddIcon /></AddSheet>
        <StripSpacer />
        <StripDots><i /><i /><i /></StripDots>
        <ScrollTrack>
          <ScrollButton><SideArrow left color="#666" /></ScrollButton>
        </ScrollTrack>
      </TabStrip>
      <StatusBar>
        Bereit
        <StatusItem $left={73}><MacroIcon /></StatusItem>
        <StatusItem $left={27}><AccessIcon /></StatusItem>
        <StatusItem $left={7}>Barrierefreiheit: Untersuchen</StatusItem>
      </StatusBar>
    </Page>
  );
};

export default App;
